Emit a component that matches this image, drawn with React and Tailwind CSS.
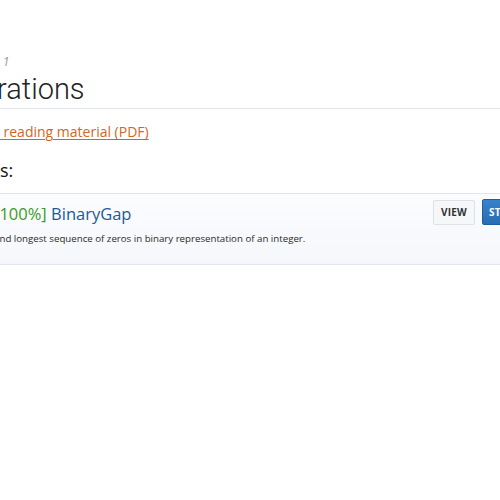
import React from 'react'

const sans = { fontFamily: '"Open Sans", "Liberation Sans", sans-serif' }

const TaskCard = ({ score, name, text }) => (
  <div className="flex items-start h-[72px] w-[612px] px-[31px] pt-[6px] border border-[#e1e6ee] bg-gradient-to-b from-[#fbfcfe] to-[#f5f7fb]">
    <div className="flex-1 pt-[2px]">
      <div className="text-[16.5px] leading-[24px] text-[#1c5a96]">
        <span className="text-[#3d9a1e]">[{score}]</span> {name}
      </div>
      <div className="mt-[5px] -ml-[2px] text-[9.7px] leading-[15px] text-[#2a2a2a]">{text}</div>
    </div>
    <div className="flex items-start gap-[7px]">
      <button className="w-[42px] h-[25px] rounded-[2px] border border-[#dde2e8] bg-[#f6f7f9] text-[10px] font-bold text-[#333] tracking-wide">
        VIEW
      </button>
      <button className="w-[60px] h-[26px] -mt-[1px] pl-[6px] text-left rounded-[2px] border border-[#1f5d9c] bg-gradient-to-b from-[#3582cc] to-[#2a6db3] text-[10px] font-bold text-white tracking-wide">
        START
      </button>
    </div>
  </div>
)

export default function App() {
  return (
    <div className="min-h-[500px] w-[500px] bg-white overflow-hidden" style={sans}>
      <div className="ml-[-38px] w-[640px] pt-[54px]">
        <div className="ml-[2px] text-[12px] leading-[16px] italic text-[#9a9a9a]">Lesson 1</div>
        <h1
          className="text-[29px] leading-[38px] font-light text-[#222] border-b border-[#dfe6ee]"
          style={{ fontFamily: 'Roboto, "Liberation Sans", sans-serif' }}
        >
          <span className="ml-[3px]">Iterations</span>
        </h1>
        <a href="#" className="block ml-[2px] mt-[12px] text-[14px] leading-[22px] text-[#d2661f] underline underline-offset-2">
          Open reading material (PDF)
        </a>
        <h2 className="mt-[14px] text-[18px] leading-[26px] text-[#111]">Tasks:</h2>
        <div className="mt-[10px]">
          <TaskCard
            score="100%"
            name="BinaryGap"
            text="Find longest sequence of zeros in binary representation of an integer."
          />
        </div>
      </div>
    </div>
  )
}
